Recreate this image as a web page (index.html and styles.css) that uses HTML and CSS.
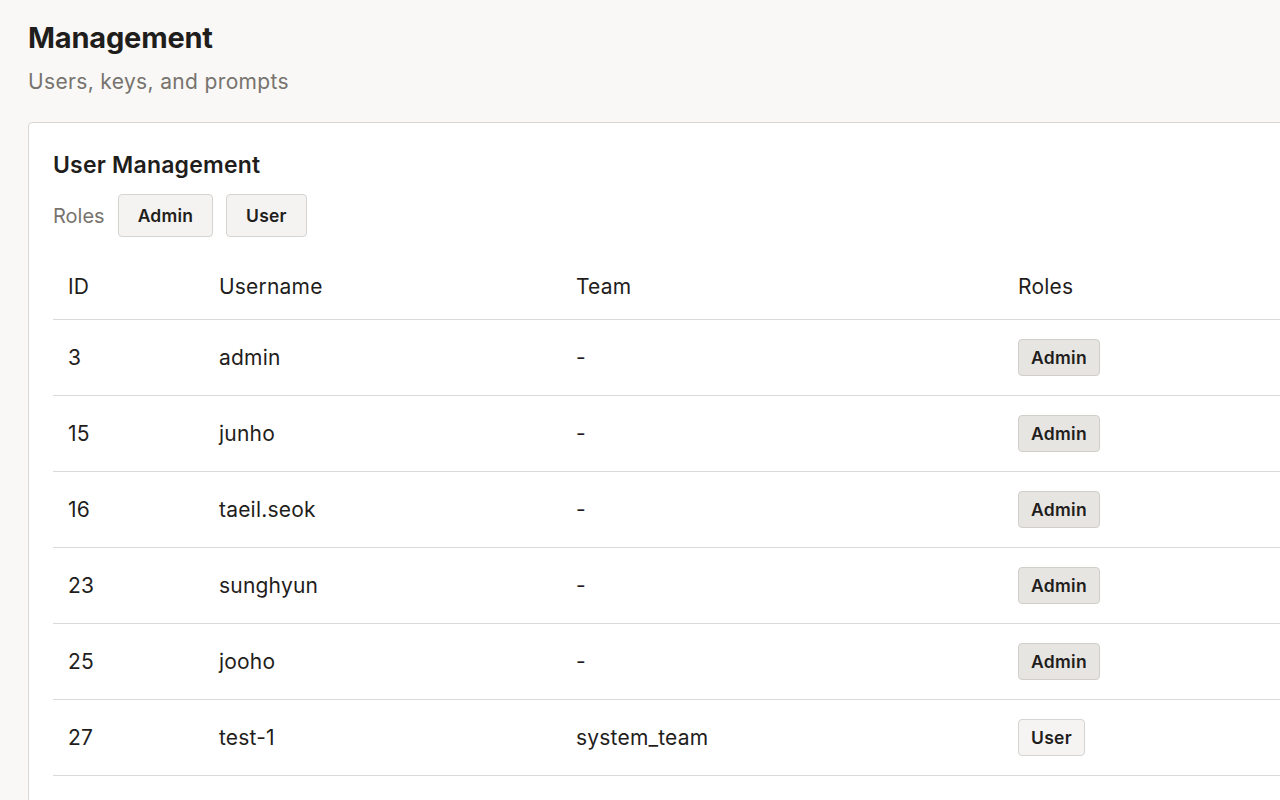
FILE: index.html
```html
<!DOCTYPE html>
<html lang="en">
<head>
<meta charset="UTF-8" />
<title>Management</title>
<link rel="stylesheet" href="styles.css">
</head>
<body>
  <div class="page">
    <h1 class="title">Management</h1>
    <p class="subtitle">Users, keys, and prompts</p>

    <div class="card">
      <h2 class="card-title">User Management</h2>
      <div class="role-filter">
        <span class="role-label">Roles</span>
        <button class="role-btn">Admin</button>
        <button class="role-btn">User</button>
      </div>

      <table class="users">
        <thead>
          <tr>
            <th class="col-id">ID</th>
            <th class="col-name">Username</th>
            <th class="col-team">Team</th>
            <th>Roles</th>
          </tr>
        </thead>
        <tbody>
          <tr><td>3</td><td>admin</td><td>-</td><td><span class="badge badge-admin">Admin</span></td></tr>
          <tr><td>15</td><td>junho</td><td>-</td><td><span class="badge badge-admin">Admin</span></td></tr>
          <tr><td>16</td><td>taeil.seok</td><td>-</td><td><span class="badge badge-admin">Admin</span></td></tr>
          <tr><td>23</td><td>sunghyun</td><td>-</td><td><span class="badge badge-admin">Admin</span></td></tr>
          <tr><td>25</td><td>jooho</td><td>-</td><td><span class="badge badge-admin">Admin</span></td></tr>
          <tr><td>27</td><td>test-1</td><td>system_team</td><td><span class="badge badge-user">User</span></td></tr>
        </tbody>
      </table>
    </div>
  </div>
</body>
</html>
```

FILE: styles.css
```css
html, body {
  margin: 0;
  padding: 0;
  overflow: hidden;
  background: #f9f8f6;
  font-family: Inter, "Noto Sans", sans-serif;
  color: #1f1e1c;
}
.page {
  padding: 20px 28px;
}
.title {
  margin: 0;
  font-size: 29px;
  line-height: 36px;
  font-weight: 700;
  letter-spacing: -0.2px;
}
.subtitle {
  margin: 12px 0 0 0;
  font-size: 21px;
  line-height: 28px;
  letter-spacing: 0.35px;
  color: #77736e;
}
.card {
  margin-top: 26px;
  width: 1500px;
  background: #fff;
  border: 1px solid #d9d7d4;
  border-radius: 4px;
  padding: 24px 24px 60px;
}
.card-title {
  margin: 0;
  font-size: 23px;
  line-height: 36px;
  font-weight: 600;
  letter-spacing: 0.2px;
}
.role-filter {
  display: flex;
  align-items: center;
  gap: 13px;
  margin-top: 11px;
}
.role-label {
  font-size: 20px;
  color: #77736e;
}
.role-btn {
  height: 43px;
  padding: 0 19px;
  font-family: inherit;
  font-size: 17.5px;
  font-weight: 600;
  letter-spacing: 0.2px;
  color: #1f1e1c;
  background: #f4f3f1;
  border: 1px solid #d6d4d1;
  border-radius: 4px;
}
.users {
  margin-top: 7px;
  width: 100%;
  border-collapse: collapse;
  font-size: 21px;
  letter-spacing: 0.2px;
}
.users th, .users td {
  height: 75px;
  padding: 0 15px;
  text-align: left;
  font-weight: 400;
  border-bottom: 1px solid #dcdad7;
}
.users th {
  height: 65px;
  padding-top: 10px;
}
.col-id { width: 121px; }
.col-name { width: 327px; }
.col-team { width: 412px; }
.badge {
  display: inline-block;
  height: 35px;
  line-height: 35px;
  padding: 0 12px;
  font-size: 17.5px;
  font-weight: 600;
  letter-spacing: 0.3px;
  border-radius: 4px;
}
.badge-admin {
  background: #e7e5e2;
  border: 1px solid #d2cfcb;
}
.badge-user {
  background: #f5f4f2;
  border: 1px solid #d6d4d1;
}
```
